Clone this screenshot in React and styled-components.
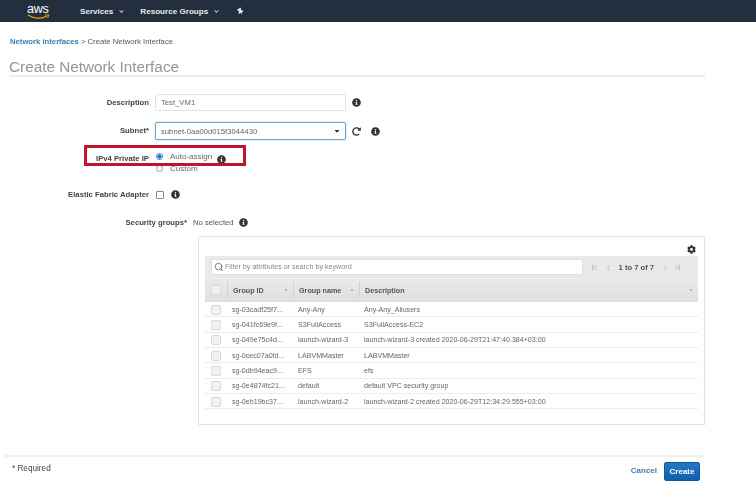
import React from "react";
import styled, { createGlobalStyle } from "styled-components";
import { FaCaretDown, FaChevronDown, FaCog, FaInfoCircle, FaRedoAlt, FaThumbtack } from "react-icons/fa";
import { ChevronFirst, ChevronLast, ChevronLeft, ChevronRight, Search } from "lucide-react";

const GlobalStyle = createGlobalStyle`
  html, body {
    margin: 0;
    padding: 0;
    background: #fff;
    overflow: hidden;
  }
  body {
    font-family: "Liberation Sans", Arial, sans-serif;
    color: #444;
  }
  * {
    box-sizing: border-box;
  }
`;

const Page = styled.div`
  position: relative;
  width: 756px;
  height: 489px;
  filter: blur(0.3px);
`;

const Nav = styled.div`
  display: flex;
  align-items: center;
  height: 22px;
  background: #232f3e;
  color: #e8eaec;
  font-size: 8.1px;
  font-weight: bold;
`;

const Logo = styled.div`
  position: relative;
  width: 22px;
  margin: 0 31px 0 27px;
  color: #fff;
  font-size: 12.5px;
  font-weight: normal;
  line-height: 12px;
  letter-spacing: -0.2px;
  padding-bottom: 5px;
`;

const Smile = styled.svg`
  position: absolute;
  left: 0;
  bottom: 0;
  width: 23px;
  height: 6px;
`;

const NavItem = styled.div`
  display: flex;
  align-items: center;
  gap: 6px;
  margin-right: ${(props) => props.gap}px;
  svg {
    width: 5px;
    height: 5px;
  }
`;

const Pin = styled(FaThumbtack)`
  width: 7px;
  height: 7px;
  transform: rotate(-30deg);
`;

const Content = styled.div`
  padding: 0 51px 0 9px;
`;

const Breadcrumb = styled.div`
  margin-top: 14px;
  height: 12px;
  font-size: 7.7px;
  line-height: 12px;
  color: #555;
  padding-left: 1px;
`;

const Crumb = styled.span`
  color: #3f7cac;
  font-weight: bold;
`;

const Title = styled.h1`
  margin: 9px 0 0;
  height: 20px;
  border-bottom: 2px solid #eaeded;
  font-size: 15.3px;
  font-weight: normal;
  line-height: 20px;
  color: #949494;
`;

const Form = styled.div`
  margin-top: 17px;
`;

const Row = styled.div`
  display: grid;
  grid-template-columns: ${(props) => props.$labelWidth || 140}px 1fr;
  column-gap: 6px;
  align-items: ${(props) => (props.$top ? "start" : "center")};
  height: ${(props) => props.$height}px;
  margin-top: ${(props) => props.$top || 0}px;
`;

const Label = styled.label`
  font-size: 7.7px;
  font-weight: bold;
  line-height: 10px;
  color: #444;
  text-align: right;
  white-space: nowrap;
  padding-top: ${(props) => props.$pad || 0}px;
`;

const Control = styled.div`
  display: flex;
  align-items: center;
  padding-top: ${(props) => props.$pad || 0}px;
  font-size: 7.7px;
  color: #555;
`;

const Input = styled.div`
  display: flex;
  align-items: center;
  justify-content: space-between;
  width: 191px;
  height: ${(props) => (props.$focus ? 18 : 17)}px;
  padding: 0 5px;
  background: #fff;
  border: 1px solid ${(props) => (props.$focus ? "#6ea3cb" : "#e2e2e2")};
  border-radius: 2px;
  box-shadow: ${(props) => (props.$focus ? "0 0 2px #9cc3de" : "none")};
  font-size: 7.7px;
  color: #666;
`;

const Caret = styled(FaCaretDown)`
  width: 8px;
  height: 8px;
  color: #333;
  margin-right: -1px;
`;

const Info = styled(FaInfoCircle)`
  width: 9px;
  height: 9px;
  color: #333;
  margin-left: ${(props) => props.$left}px;
  margin-top: ${(props) => props.$drop || 0}px;
  flex: none;
`;

const Refresh = styled(FaRedoAlt)`
  width: 9px;
  height: 9px;
  color: #333;
  margin-left: 6px;
`;

const Radios = styled.div`
  display: flex;
  flex-direction: column;
  gap: 3px;
  padding-left: 1px;
`;

const RadioLine = styled.div`
  display: flex;
  align-items: center;
  height: 9px;
  font-size: 8px;
  color: #666;
`;

const Radio = styled.span`
  width: 7px;
  height: 7px;
  margin-right: 7px;
  border-radius: 50%;
  border: 1px solid ${(props) => (props.$on ? "#2b79c2" : "#999")};
  background: ${(props) => (props.$on ? "radial-gradient(circle, #1e72c4 55%, #fff 60%)" : "#fff")};
`;

const Check = styled.span`
  width: 8px;
  height: 8px;
  margin-left: 1px;
  border: 1px solid #888;
  border-radius: 1px;
  background: #fff;
`;

const Panel = styled.div`
  width: 507px;
  height: 189px;
  margin: 5px 0 0 189px;
  padding: 0 6px;
  border: 1px solid #e4e4e4;
`;

const PanelTop = styled.div`
  display: flex;
  align-items: center;
  justify-content: flex-end;
  height: 19px;
  padding: 5px 2px 0 0;
  svg {
    width: 9px;
    height: 9px;
    color: #333;
  }
`;

const Toolbar = styled.div`
  display: flex;
  align-items: center;
  height: 22px;
  padding: 0 16px 0 6px;
  background: #e9e9e9;
`;

const SearchBox = styled.div`
  display: flex;
  align-items: center;
  gap: 1px;
  width: 372px;
  height: 16px;
  padding: 0 2px;
  background: #fff;
  border: 1px solid #e0e0e0;
  font-size: 7.15px;
  color: #888;
  svg {
    width: 10px;
    height: 10px;
    color: #666;
  }
`;

const Pager = styled.div`
  display: flex;
  align-items: center;
  margin-left: auto;
  font-size: 7.6px;
  font-weight: bold;
  color: #555;
  svg {
    width: 9px;
    height: 9px;
    color: #aaa;
  }
`;

const PagerText = styled.span`
  margin: 0 7px 0 6px;
  white-space: nowrap;
`;

const Columns = "22px 66px 66px 1fr";

const HeadRow = styled.div`
  display: grid;
  grid-template-columns: ${Columns};
  align-items: center;
  height: 24px;
  background: linear-gradient(#ebebeb, #dfdfdf);
  font-size: 7.2px;
  font-weight: bold;
  color: #555;
`;

const HeadCell = styled.div`
  display: flex;
  align-items: center;
  justify-content: space-between;
  height: 16px;
  padding: 0 5px 0 5px;
  border-left: 1px solid #d2d2d2;
  svg {
    width: 4px;
    height: 4px;
    color: #777;
  }
`;

const BodyRow = styled.div`
  display: grid;
  grid-template-columns: ${Columns};
  align-items: center;
  height: 15.35px;
  padding-top: 1px;
  border-bottom: 1px solid #ececec;
  font-size: 7.1px;
  color: #666;
`;

const Cell = styled.div`
  padding-left: 5px;
  white-space: nowrap;
  overflow: hidden;
`;

const BoxCell = styled.div`
  display: flex;
  justify-content: center;
`;

const RowBox = styled.span`
  width: 10px;
  height: 10px;
  border: 1px solid #d8d8d8;
  border-radius: 2px;
  background: #f1f1f1;
`;

const Footer = styled.div`
  display: flex;
  align-items: flex-start;
  height: 30px;
  margin: 30px 0 0 -5px;
  padding: 5px 5px 0 8px;
  border-top: 2px solid #eff0f0;
`;

const Required = styled.div`
  margin-top: 2px;
  font-size: 8.2px;
  color: #444;
  line-height: 10px;
`;

const Cancel = styled.div`
  margin: 0 7px 0 auto;
  font-size: 8px;
  font-weight: bold;
  color: #4a78a8;
  line-height: 18px;
`;

const CreateButton = styled.button`
  width: 36px;
  height: 19px;
  padding: 0;
  background: linear-gradient(#2378c8, #105fa8);
  border: 1px solid #0e5a9e;
  border-radius: 2px;
  color: #fff;
  font-family: inherit;
  font-size: 8px;
  font-weight: bold;
`;

const Highlight = styled.div`
  position: absolute;
  left: 84px;
  top: 145px;
  width: 162px;
  height: 21px;
  border: 3px solid #c4122f;
  pointer-events: none;
`;

const groups = [
  ["sg-03cadf25f7...", "Any-Any", "Any-Any_Allusers"],
  ["sg-041fc69e9f...", "S3FullAccess", "S3FullAccess-EC2"],
  ["sg-049e75c4d...", "launch-wizard-3", "launch-wizard-3 created 2020-06-29T21:47:40.384+03:00"],
  ["sg-0cec07a0fd...", "LABVMMaster", "LABVMMaster"],
  ["sg-0db94eac9...", "EFS", "efs"],
  ["sg-0e4874fc21...", "default", "default VPC security group"],
  ["sg-0eb19bc37...", "launch-wizard-2", "launch-wizard-2 created 2020-06-29T12:34:29.555+03:00"],
];

function App() {
  return (
    <Page>
      <GlobalStyle />
      <Nav>
        <Logo>
          aws
          <Smile viewBox="0 0 23 6">
            <path d="M1 1 C7 5 15 5 20 2" stroke="#f90" strokeWidth="1.2" fill="none" />
            <path d="M18 1 L22 1 L20.5 4" stroke="#f90" strokeWidth="1" fill="none" />
          </Smile>
        </Logo>
        <NavItem gap={16}>
          Services <FaChevronDown />
        </NavItem>
        <NavItem gap={18}>
          Resource Groups <FaChevronDown />
        </NavItem>
        <Pin />
      </Nav>
      <Content>
        <Breadcrumb>
          <Crumb>Network interfaces</Crumb> &gt; Create Network Interface
        </Breadcrumb>
        <Title>Create Network Interface</Title>
        <Form>
          <Row $height={17}>
            <Label>Description</Label>
            <Control>
              <Input>Test_VM1</Input>
              <Info $left={6} />
            </Control>
          </Row>
          <Row $height={18} $top={11}>
            <Label $pad={4}>Subnet*</Label>
            <Control>
              <Input $focus>
                subnet-0aa00d015f3044430
                <Caret />
              </Input>
              <Refresh />
              <Info $left={10} />
            </Control>
          </Row>
          <Row $height={24} $top={12}>
            <Label $pad={2}>IPv4 Private IP</Label>
            <Radios>
              <RadioLine>
                <Radio $on />
                Auto-assign
                <Info $left={5} $drop={5} />
              </RadioLine>
              <RadioLine>
                <Radio />
                Custom
              </RadioLine>
            </Radios>
          </Row>
          <Row $height={14} $top={13}>
            <Label $pad={0.5}>Elastic Fabric Adapter</Label>
            <Control $pad={1}>
              <Check />
              <Info $left={7} />
            </Control>
          </Row>
          <Row $height={14} $top={14} $labelWidth={178}>
            <Label $pad={1}>Security groups*</Label>
            <Control $pad={1}>
              No selected
              <Info $left={5} />
            </Control>
          </Row>
        </Form>
        <Panel>
          <PanelTop>
            <FaCog />
          </PanelTop>
          <Toolbar>
            <SearchBox>
              <Search />
              Filter by attributes or search by keyword
            </SearchBox>
            <Pager>
              <ChevronFirst />
              <ChevronLeft style={{ marginLeft: 5 }} />
              <PagerText>1 to 7 of 7</PagerText>
              <ChevronRight />
              <ChevronLast style={{ marginLeft: 3 }} />
            </Pager>
          </Toolbar>
          <HeadRow>
            <BoxCell>
              <RowBox />
            </BoxCell>
            <HeadCell>
              Group ID <FaCaretDown />
            </HeadCell>
            <HeadCell>
              Group name <FaCaretDown />
            </HeadCell>
            <HeadCell>
              Description <FaCaretDown />
            </HeadCell>
          </HeadRow>
          {groups.map((group) => (
            <BodyRow key={group[0]}>
              <BoxCell>
                <RowBox />
              </BoxCell>
              <Cell>{group[0]}</Cell>
              <Cell>{group[1]}</Cell>
              <Cell>{group[2]}</Cell>
            </BodyRow>
          ))}
        </Panel>
        <Footer>
          <Required>* Required</Required>
          <Cancel>Cancel</Cancel>
          <CreateButton>Create</CreateButton>
        </Footer>
      </Content>
      <Highlight />
    </Page>
  );
}

export default App;
